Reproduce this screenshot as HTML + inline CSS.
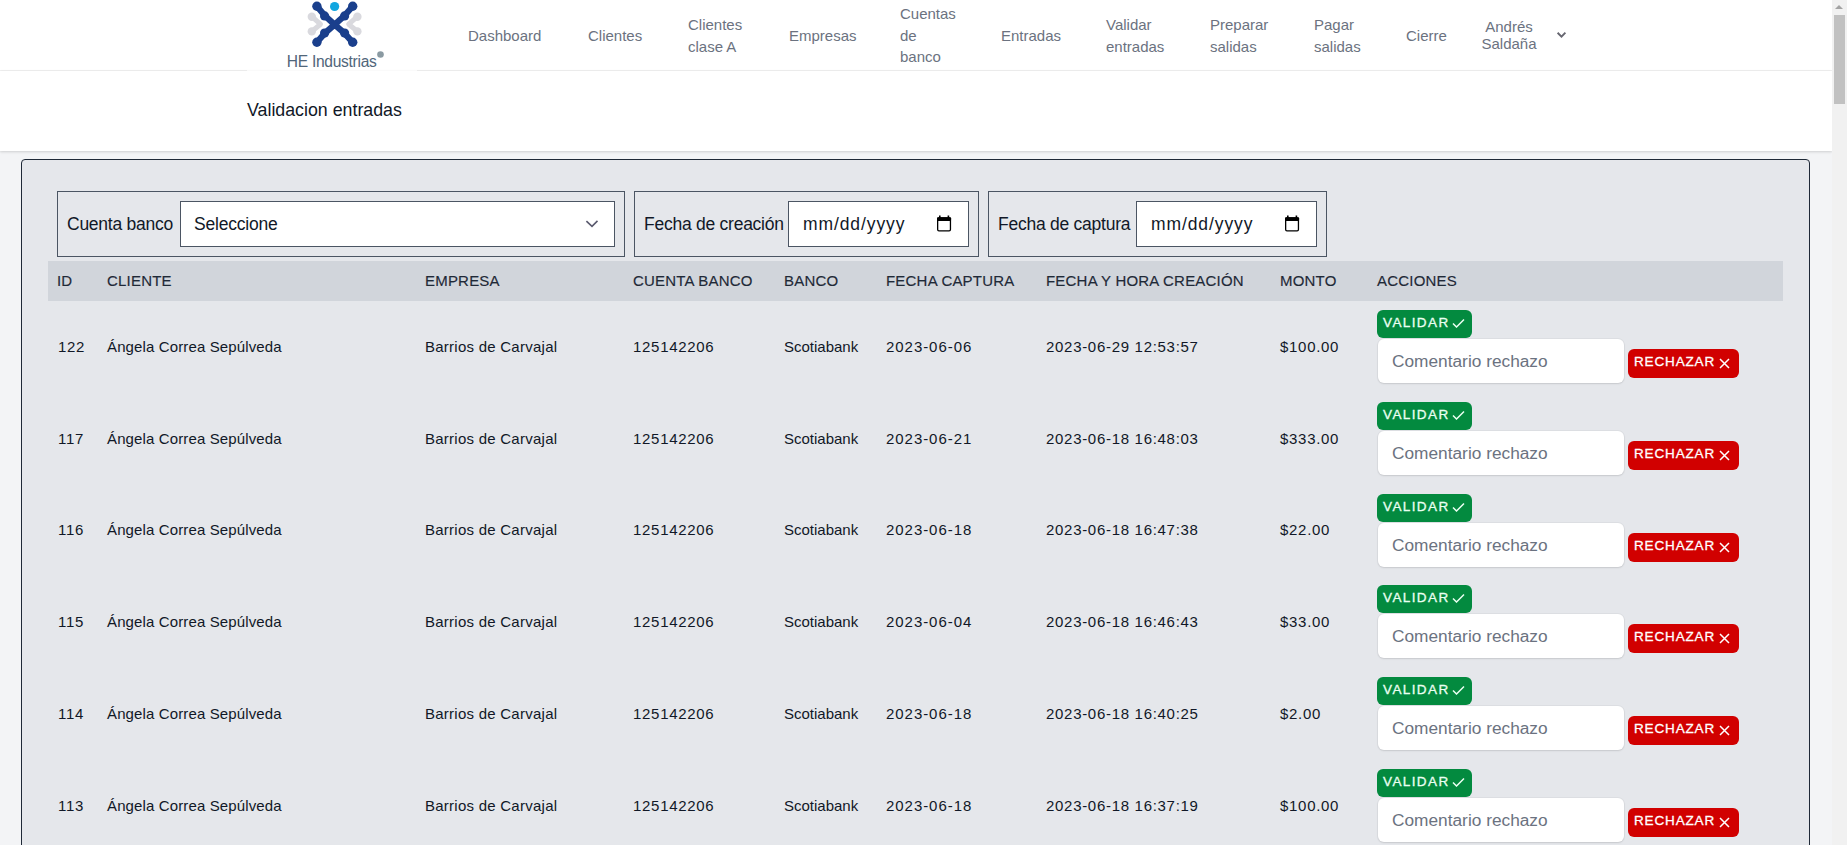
<!DOCTYPE html>
<html><head><meta charset="utf-8"><title>Validacion entradas</title>
<style>
*{box-sizing:border-box;margin:0;padding:0}
html,body{width:1847px;height:845px;overflow:hidden}
body{background:#f3f4f6;font-family:"Liberation Sans",sans-serif;position:relative;color:#1f2937}
.nav{position:absolute;left:0;top:0;width:1832px;height:71px;background:#fff;border-bottom:1px solid #f0f0f0}
.logo{position:absolute;left:247px;top:0;width:170px;height:75px;background:#fff}
.nl{position:absolute;font-size:15px;line-height:21.7px;color:#6b7280;white-space:nowrap}
.hdr{position:absolute;left:0;top:71px;width:1832px;height:80px;background:#fff;box-shadow:0 1px 3px rgba(0,0,0,0.1),0 1px 2px rgba(0,0,0,0.06)}
.title{position:absolute;left:247px;top:29px;font-size:17.8px;color:#111827;white-space:nowrap}
.card{position:absolute;left:21px;top:159px;width:1789px;height:720px;background:#e5e7eb;border:1px solid #1f2937;border-radius:4px;overflow:hidden}
.fbox{position:absolute;top:191px;height:66px;border:1px solid #4b5563}
.flabel{position:absolute;font-size:17.5px;letter-spacing:-0.25px;color:#111827;white-space:nowrap}
.finput{position:absolute;top:201px;height:46px;background:#fff;border:1px solid #4b5563}
.ftext{position:absolute;font-size:17.5px;letter-spacing:-0.2px;color:#111827;white-space:nowrap}
.th{position:absolute;left:48px;top:261px;width:1735px;height:40px;background:#d1d5db}
.h{position:absolute;top:272px;font-size:15px;color:#1f2937;white-space:nowrap;letter-spacing:0.2px;-webkit-text-stroke:0.15px #1f2937}
.row{position:absolute;left:0;width:1847px;height:92px}
.c{position:absolute;top:36.8px;font-size:15px;color:#111827;white-space:nowrap}
.val{position:absolute;left:1377px;top:9px;width:95px;height:28px;background:#038a3f;border-radius:6px;color:#eafff2;font-size:13.5px;letter-spacing:1.4px;padding:5px 0 0 6px;white-space:nowrap;-webkit-text-stroke:0.3px #eafff2}
.val svg{position:absolute;left:75px;top:8px}
.cmt{position:absolute;left:1378px;top:38px;width:246px;height:44px;background:#fff;border-radius:6px;box-shadow:0 1px 2px rgba(0,0,0,0.1),0 0 0 1px rgba(0,0,0,0.03);color:#6b7280;font-size:17.3px;padding:12px 0 0 14px;white-space:nowrap}
.rej{position:absolute;left:1628px;top:48px;width:111px;height:29px;background:#d10000;border-radius:6px;color:#fff;font-size:13.5px;letter-spacing:0.85px;padding:5px 0 0 6px;white-space:nowrap;-webkit-text-stroke:0.3px #fff}
.rej svg{position:absolute;left:91px;top:9px}
.sb{position:absolute;left:1832px;top:0;width:15px;height:845px;background:#f1f1f1}
.sbthumb{position:absolute;left:2px;top:15px;width:11px;height:89px;background:#c1c1c1;border-radius:0}
.sbup{position:absolute;left:3px;top:5px;width:0;height:0;border-left:4.5px solid transparent;border-right:4.5px solid transparent;border-bottom:4px solid #a3a3a3}

.c.num{letter-spacing:0.7px}
.ftext.date{letter-spacing:0.9px}

</style></head><body>
<div class="nav">
<div class="logo"></div>
<svg class="logosvg" width="170" height="75" viewBox="247 0 170 75" style="position:absolute;left:247px;top:0">
<g fill="#d9d9de" stroke="#d9d9de" stroke-linecap="round" stroke-linejoin="round">
<path d="M311.8 16.6 L320.5 24.2 L311.8 31.4" fill="none" stroke-width="5"/>
<circle cx="311.8" cy="16.8" r="4.2" stroke="none"/><circle cx="311.8" cy="31.4" r="4.2" stroke="none"/>
<path d="M357.4 16.6 L348.7 24.2 L357.4 31.4" fill="none" stroke-width="5"/>
<circle cx="357.4" cy="16.8" r="4.2" stroke="none"/><circle cx="357.4" cy="31.4" r="4.2" stroke="none"/>
</g>
<g fill="none" stroke="#1a3f8c" stroke-linecap="round" stroke-linejoin="round" stroke-width="6.2">
<path d="M316.9 6.2 L324.9 15.7 L334.6 24.6 L344.4 15.7 L352.7 6.2"/>
<path d="M316.9 42.3 L324.9 33.1 L334.6 24.6 L344.4 33.1 L352.7 42.3"/>
</g>
<g fill="#1a3f8c">
<circle cx="316.9" cy="6.2" r="4.7"/><circle cx="352.7" cy="6.2" r="4.7"/>
<circle cx="316.9" cy="42.3" r="4.7"/><circle cx="352.7" cy="42.3" r="4.7"/>
<circle cx="324.6" cy="15.9" r="4.6"/><circle cx="344.6" cy="15.9" r="4.6"/>
<circle cx="324.6" cy="33.1" r="4.6"/><circle cx="344.6" cy="33.1" r="4.6"/>
</g>
<circle cx="334.6" cy="6.5" r="4.6" fill="#11a6e0"/>
<text x="286.8" y="66.5" font-family="Liberation Sans" font-size="15.6" letter-spacing="-0.3" fill="#51667a">HE Industrias</text>
<circle cx="380.5" cy="54.5" r="3.3" fill="#8a9aa2"/>
</svg>
<div class="nl" style="left:468px;top:25px">Dashboard</div>
<div class="nl" style="left:588px;top:25px">Clientes</div>
<div class="nl" style="left:688px;top:14px">Clientes<br>clase A</div>
<div class="nl" style="left:789px;top:25px">Empresas</div>
<div class="nl" style="left:900px;top:3px">Cuentas<br>de<br>banco</div>
<div class="nl" style="left:1001px;top:25px">Entradas</div>
<div class="nl" style="left:1106px;top:14px">Validar<br>entradas</div>
<div class="nl" style="left:1210px;top:14px">Preparar<br>salidas</div>
<div class="nl" style="left:1314px;top:14px">Pagar<br>salidas</div>
<div class="nl" style="left:1406px;top:25px">Cierre</div>
<div class="nl" style="left:1481px;top:18px;line-height:17px;text-align:center;width:56px">Andrés<br>Saldaña</div>
<svg width="12" height="9" style="position:absolute;left:1555px;top:30px" viewBox="1555 30 12 9"><path d="M1557.6 32.8 L1561.5 36.6 L1565.4 32.6" fill="none" stroke="#666670" stroke-width="1.9"/></svg>
</div>
<div class="hdr"><div class="title">Validacion entradas</div></div>
<div class="card"></div>
<div id="content">
<div class="fbox" style="left:57px;width:568px"></div>
<div class="flabel" style="left:67px;top:214px">Cuenta banco</div>
<div class="finput" style="left:180px;width:435px"></div>
<div class="ftext" style="left:194px;top:214px">Seleccione</div>
<svg width="16" height="10" style="position:absolute;left:584px;top:219px" viewBox="584 219 16 10"><path d="M586.4 221.1 L592 226.4 L597.5 220.9" fill="none" stroke="#5a5a6e" stroke-width="1.6"/></svg>
<div class="fbox" style="left:634px;width:345px"></div>
<div class="flabel" style="left:644px;top:214px">Fecha de creación</div>
<div class="finput" style="left:788px;width:181px"></div>
<div class="ftext date" style="left:803px;top:214px">mm/dd/yyyy</div>
<svg class="cal" style="position:absolute;left:936px;top:214px" width="17" height="19" viewBox="936 214 17 19"><rect x="937.65" y="218" width="12.8" height="12.8" rx="1.3" fill="none" stroke="#000" stroke-width="1.3"/><rect x="937" y="217.2" width="14.1" height="3.8" rx="1" fill="#000"/><rect x="939" y="215.5" width="1.6" height="2.5" fill="#000"/><rect x="947.6" y="215.5" width="1.6" height="2.5" fill="#000"/></svg>
<div class="fbox" style="left:988px;width:339px"></div>
<div class="flabel" style="left:998px;top:214px">Fecha de captura</div>
<div class="finput" style="left:1136px;width:181px"></div>
<div class="ftext date" style="left:1151px;top:214px">mm/dd/yyyy</div>
<svg class="cal" style="position:absolute;left:1284px;top:214px" width="17" height="19" viewBox="936 214 17 19"><rect x="937.65" y="218" width="12.8" height="12.8" rx="1.3" fill="none" stroke="#000" stroke-width="1.3"/><rect x="937" y="217.2" width="14.1" height="3.8" rx="1" fill="#000"/><rect x="939" y="215.5" width="1.6" height="2.5" fill="#000"/><rect x="947.6" y="215.5" width="1.6" height="2.5" fill="#000"/></svg>
<div class="th"></div>
<span class="h" style="left:57px">ID</span>
<span class="h" style="left:107px">CLIENTE</span>
<span class="h" style="left:425px">EMPRESA</span>
<span class="h" style="left:633px">CUENTA BANCO</span>
<span class="h" style="left:784px">BANCO</span>
<span class="h" style="left:886px">FECHA CAPTURA</span>
<span class="h" style="left:1046px">FECHA Y HORA CREACIÓN</span>
<span class="h" style="left:1280px">MONTO</span>
<span class="h" style="left:1377px">ACCIONES</span>

<div class="row" style="top:301.00px">
<span class="c num" style="left:58px">122</span>
<span class="c" style="left:107px;letter-spacing:0.13px">Ángela Correa Sepúlveda</span>
<span class="c" style="left:425px;letter-spacing:0.25px">Barrios de Carvajal</span>
<span class="c num" style="left:633px">125142206</span>
<span class="c" style="left:784px">Scotiabank</span>
<span class="c num" style="left:886px;letter-spacing:0.95px">2023-06-06</span>
<span class="c num" style="left:1046px">2023-06-29 12:53:57</span>
<span class="c num" style="left:1280px">$100.00</span>
<div class="val">VALIDAR<svg width="13" height="10" viewBox="0 0 13 10"><path d="M1 5.5 L4.5 9 L12 1.5" fill="none" stroke="#eafff2" stroke-width="1.5"/></svg></div>
<div class="cmt">Comentario rechazo</div>
<div class="rej">RECHAZAR<svg width="11" height="11" viewBox="0 0 11 11"><path d="M1 1 L10 10 M10 1 L1 10" fill="none" stroke="#fff" stroke-width="1.5"/></svg></div>
</div><div class="row" style="top:392.80px">
<span class="c num" style="left:58px">117</span>
<span class="c" style="left:107px;letter-spacing:0.13px">Ángela Correa Sepúlveda</span>
<span class="c" style="left:425px;letter-spacing:0.25px">Barrios de Carvajal</span>
<span class="c num" style="left:633px">125142206</span>
<span class="c" style="left:784px">Scotiabank</span>
<span class="c num" style="left:886px;letter-spacing:0.95px">2023-06-21</span>
<span class="c num" style="left:1046px">2023-06-18 16:48:03</span>
<span class="c num" style="left:1280px">$333.00</span>
<div class="val">VALIDAR<svg width="13" height="10" viewBox="0 0 13 10"><path d="M1 5.5 L4.5 9 L12 1.5" fill="none" stroke="#eafff2" stroke-width="1.5"/></svg></div>
<div class="cmt">Comentario rechazo</div>
<div class="rej">RECHAZAR<svg width="11" height="11" viewBox="0 0 11 11"><path d="M1 1 L10 10 M10 1 L1 10" fill="none" stroke="#fff" stroke-width="1.5"/></svg></div>
</div><div class="row" style="top:484.60px">
<span class="c num" style="left:58px">116</span>
<span class="c" style="left:107px;letter-spacing:0.13px">Ángela Correa Sepúlveda</span>
<span class="c" style="left:425px;letter-spacing:0.25px">Barrios de Carvajal</span>
<span class="c num" style="left:633px">125142206</span>
<span class="c" style="left:784px">Scotiabank</span>
<span class="c num" style="left:886px;letter-spacing:0.95px">2023-06-18</span>
<span class="c num" style="left:1046px">2023-06-18 16:47:38</span>
<span class="c num" style="left:1280px">$22.00</span>
<div class="val">VALIDAR<svg width="13" height="10" viewBox="0 0 13 10"><path d="M1 5.5 L4.5 9 L12 1.5" fill="none" stroke="#eafff2" stroke-width="1.5"/></svg></div>
<div class="cmt">Comentario rechazo</div>
<div class="rej">RECHAZAR<svg width="11" height="11" viewBox="0 0 11 11"><path d="M1 1 L10 10 M10 1 L1 10" fill="none" stroke="#fff" stroke-width="1.5"/></svg></div>
</div><div class="row" style="top:576.40px">
<span class="c num" style="left:58px">115</span>
<span class="c" style="left:107px;letter-spacing:0.13px">Ángela Correa Sepúlveda</span>
<span class="c" style="left:425px;letter-spacing:0.25px">Barrios de Carvajal</span>
<span class="c num" style="left:633px">125142206</span>
<span class="c" style="left:784px">Scotiabank</span>
<span class="c num" style="left:886px;letter-spacing:0.95px">2023-06-04</span>
<span class="c num" style="left:1046px">2023-06-18 16:46:43</span>
<span class="c num" style="left:1280px">$33.00</span>
<div class="val">VALIDAR<svg width="13" height="10" viewBox="0 0 13 10"><path d="M1 5.5 L4.5 9 L12 1.5" fill="none" stroke="#eafff2" stroke-width="1.5"/></svg></div>
<div class="cmt">Comentario rechazo</div>
<div class="rej">RECHAZAR<svg width="11" height="11" viewBox="0 0 11 11"><path d="M1 1 L10 10 M10 1 L1 10" fill="none" stroke="#fff" stroke-width="1.5"/></svg></div>
</div><div class="row" style="top:668.20px">
<span class="c num" style="left:58px">114</span>
<span class="c" style="left:107px;letter-spacing:0.13px">Ángela Correa Sepúlveda</span>
<span class="c" style="left:425px;letter-spacing:0.25px">Barrios de Carvajal</span>
<span class="c num" style="left:633px">125142206</span>
<span class="c" style="left:784px">Scotiabank</span>
<span class="c num" style="left:886px;letter-spacing:0.95px">2023-06-18</span>
<span class="c num" style="left:1046px">2023-06-18 16:40:25</span>
<span class="c num" style="left:1280px">$2.00</span>
<div class="val">VALIDAR<svg width="13" height="10" viewBox="0 0 13 10"><path d="M1 5.5 L4.5 9 L12 1.5" fill="none" stroke="#eafff2" stroke-width="1.5"/></svg></div>
<div class="cmt">Comentario rechazo</div>
<div class="rej">RECHAZAR<svg width="11" height="11" viewBox="0 0 11 11"><path d="M1 1 L10 10 M10 1 L1 10" fill="none" stroke="#fff" stroke-width="1.5"/></svg></div>
</div><div class="row" style="top:760.00px">
<span class="c num" style="left:58px">113</span>
<span class="c" style="left:107px;letter-spacing:0.13px">Ángela Correa Sepúlveda</span>
<span class="c" style="left:425px;letter-spacing:0.25px">Barrios de Carvajal</span>
<span class="c num" style="left:633px">125142206</span>
<span class="c" style="left:784px">Scotiabank</span>
<span class="c num" style="left:886px;letter-spacing:0.95px">2023-06-18</span>
<span class="c num" style="left:1046px">2023-06-18 16:37:19</span>
<span class="c num" style="left:1280px">$100.00</span>
<div class="val">VALIDAR<svg width="13" height="10" viewBox="0 0 13 10"><path d="M1 5.5 L4.5 9 L12 1.5" fill="none" stroke="#eafff2" stroke-width="1.5"/></svg></div>
<div class="cmt">Comentario rechazo</div>
<div class="rej">RECHAZAR<svg width="11" height="11" viewBox="0 0 11 11"><path d="M1 1 L10 10 M10 1 L1 10" fill="none" stroke="#fff" stroke-width="1.5"/></svg></div>
</div>
</div>
<div class="sb"><div class="sbup"></div><div class="sbthumb"></div></div>
</body></html>
